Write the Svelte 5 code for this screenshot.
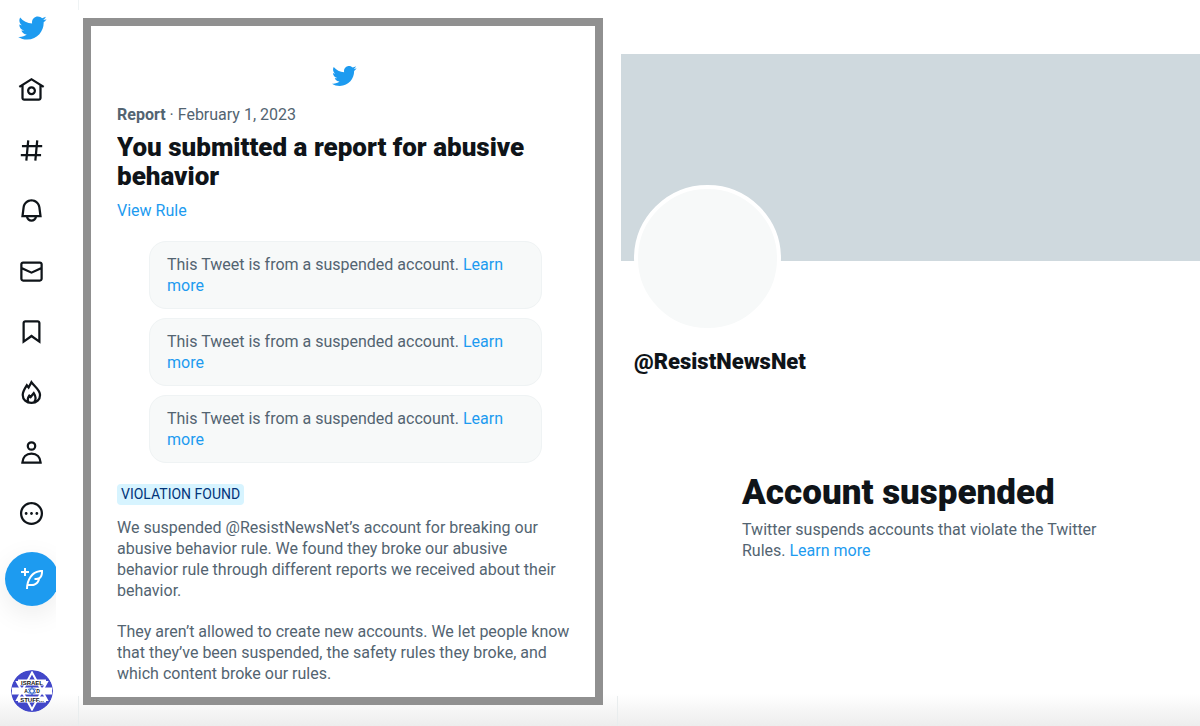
<script lang="ts">
	const bird =
		'M23.643 4.937c-.835.37-1.732.62-2.675.733.962-.576 1.7-1.49 2.048-2.578-.9.534-1.897.922-2.958 1.13-.85-.904-2.06-1.47-3.4-1.47-2.572 0-4.658 2.086-4.658 4.66 0 .364.042.718.12 1.06-3.873-.195-7.304-2.05-9.602-4.868-.4.69-.63 1.49-.63 2.342 0 1.616.823 3.043 2.072 3.878-.764-.025-1.482-.234-2.11-.583v.06c0 2.257 1.605 4.14 3.737 4.568-.392.106-.803.162-1.227.162-.3 0-.593-.028-.877-.082.593 1.85 2.313 3.198 4.352 3.234-1.595 1.25-3.604 1.995-5.786 1.995-.376 0-.747-.022-1.112-.065 2.062 1.323 4.51 2.093 7.14 2.093 8.57 0 13.255-7.098 13.255-13.254 0-.2-.005-.402-.014-.602.91-.658 1.7-1.477 2.323-2.41z';

	const navItems = [
		{
			label: 'Home',
			path: 'M12 9c-2.209 0-4 1.791-4 4s1.791 4 4 4 4-1.791 4-4-1.791-4-4-4zm0 6c-1.105 0-2-.895-2-2s.895-2 2-2 2 .895 2 2-.895 2-2 2zm0-13.304L.622 8.807l1.06 1.696L3 9.679V19.5C3 20.881 4.119 22 5.5 22h13c1.381 0 2.5-1.119 2.5-2.5V9.679l1.318.824 1.06-1.696L12 1.696zM19 19.5c0 .276-.224.5-.5.5h-13c-.276 0-.5-.224-.5-.5V8.429l7-4.375 7 4.375V19.5z'
		},
		{
			label: 'Explore',
			path: 'M10.09 3.098L9.72 7h5.99l.39-4.089 1.99.187L17.72 7h3.78v2h-3.97l-.56 6h3.53v2h-3.72l-.38 4.089-1.99-.187.36-3.902H8.78l-.38 4.089-1.99-.187L6.77 17H2.5v-2h4.46l.56-6H3.5V7h4.21l.39-4.089 1.99.187zM14.96 15l.56-6H9.53l-.56 6h5.99z'
		},
		{
			label: 'Notifications',
			path: 'M19.993 9.042C19.48 5.017 16.054 2 11.996 2s-7.49 3.021-7.999 7.051L2.866 18H7.1c.463 2.282 2.481 4 4.9 4s4.437-1.718 4.9-4h4.236l-1.143-8.958zM12 20c-1.306 0-2.417-.835-2.829-2h5.658c-.412 1.165-1.523 2-2.829 2zm-6.866-4l.847-6.698C6.364 6.272 8.941 4 11.996 4s5.627 2.268 6.013 5.295L18.864 16H5.134z'
		},
		{
			label: 'Messages',
			path: 'M1.998 5.5c0-1.381 1.119-2.5 2.5-2.5h15c1.381 0 2.5 1.119 2.5 2.5v13c0 1.381-1.119 2.5-2.5 2.5h-15c-1.381 0-2.5-1.119-2.5-2.5v-13zm2.5-.5c-.276 0-.5.224-.5.5v2.764l8 3.638 8-3.636V5.5c0-.276-.224-.5-.5-.5h-15zm15.5 5.463l-8 3.636-8-3.638V18.5c0 .276.224.5.5.5h15c.276 0 .5-.224.5-.5v-8.037z'
		},
		{
			label: 'Bookmarks',
			path: 'M4 4.5C4 3.12 5.119 2 6.5 2h11C18.881 2 20 3.12 20 4.5v18.44l-8-5.71-8 5.71V4.5zM6.5 4c-.276 0-.5.22-.5.5v14.56l6-4.29 6 4.29V4.5c0-.28-.224-.5-.5-.5h-11z'
		},
		{
			label: 'Trending',
			stroke:
				'M11.9 2.8L9.4 7.6L7.8 5.6C6 8.4 4.2 11 4.2 14.2C4.2 18.2 7.4 21.2 12 21.2S19.6 18.2 19.6 14.2C19.6 9.4 14.4 6.4 11.9 2.8zM9.4 20.6C8 18.6 8.8 16.6 10 14.9L11.2 16L14 12.6C15.6 15 16.4 18 14.4 20.6'
		},
		{
			label: 'Profile',
			stroke:
				'M12 2.9a3.3 3.3 0 1 0 0 6.6a3.3 3.3 0 0 0 0-6.6zM3.9 20.9h16.2C19.8 16.2 16.8 12.9 12 12.9S4.2 16.2 3.9 20.9z'
		},
		{
			label: 'More',
			path: 'M3.75 12c0-4.56 3.69-8.25 8.25-8.25s8.25 3.69 8.25 8.25-3.69 8.25-8.25 8.25S3.75 16.56 3.75 12zM12 1.75C6.34 1.75 1.75 6.34 1.75 12S6.34 22.25 12 22.25 22.25 17.66 22.25 12 17.66 1.75 12 1.75zm-4.75 11.5c.69 0 1.25-.56 1.25-1.25s-.56-1.25-1.25-1.25S6 11.31 6 12s.56 1.25 1.25 1.25zm9.5 0c.69 0 1.25-.56 1.25-1.25s-.56-1.25-1.25-1.25-1.25.56-1.25 1.25.56 1.25 1.25 1.25zM13.25 12c0 .69-.56 1.25-1.25 1.25s-1.25-.56-1.25-1.25.56-1.25 1.25-1.25 1.25.56 1.25 1.25z'
		}
	];

	const tweets = [1, 2, 3];
	const handle = '@ResistNewsNet';
</script>

<div class="page">
	<header class="sidebar">
		<a class="logo" href="#home" aria-label="Twitter">
			<svg viewBox="0 0 24 24"><path d={bird} /></svg>
		</a>

		<nav aria-label="Primary">
			{#each navItems as item}
				<a href="#{item.label.toLowerCase()}" aria-label={item.label}>
					<svg viewBox="0 0 24 24">
						{#if item.stroke}
							<path class="line" d={item.stroke} />
						{:else}
							<path d={item.path} />
						{/if}
					</svg>
				</a>
			{/each}
		</nav>

		<button class="compose" aria-label="Tweet">
			<svg viewBox="0 0 24 24">
				<path d="M23 3c-6.62-.1-10.38 2.421-13.05 6.03C7.29 12.61 6 17.331 6 22h2c0-1.007.07-2.012.19-3H12c4.1 0 7.48-3.082 7.94-7.054C22.79 10.147 23.17 6.359 23 3zm-7 8h-1.5v2H16c.63-.016 1.2-.08 1.72-.188C16.95 15.24 14.68 17 12 17H8.55c.57-2.512 1.57-4.851 3-6.78 2.16-2.912 5.29-4.911 9.45-5.187C20.95 8.079 19.9 11 16 11zM4 9V6H1V4h3V1h2v3h3v2H6v3H4z" />
			</svg>
		</button>

		<button class="me" aria-label="Account">
			<svg viewBox="0 0 42 42">
				<circle cx="21" cy="21" r="21" fill="#4247c9" />
				<path d="M21 2.5L36 30H6zM21 39.5L6 12H36z" fill="none" stroke="#fff" stroke-width="2" />
				<path d="M7 9.5h28v6H7zM1 17.5h40v7H1zM7 26.5h28v6H7z" fill="#fff" />
				<path d="M21 17L24.5 23H17.5zM21 25L17.5 19H24.5z" fill="none" stroke="#3f6fd0" stroke-width="1" />
				<text x="21" y="14.7" font-size="6">ISRAEL</text>
				<text x="15" y="22.9" font-size="5">A</text>
				<text x="27" y="22.9" font-size="5">D</text>
				<text x="21" y="31.7" font-size="6">STUFF...</text>
			</svg>
		</button>
	</header>

	<main class="report-column">
		<section class="report">
			<div class="report-body">
				<svg class="report-bird" viewBox="0 0 24 24"><path d={bird} /></svg>
				<p class="meta"><strong>Report</strong> · February 1, 2023</p>
				<h1>You submitted a report for abusive behavior</h1>
				<a href="#rule">View Rule</a>

				<div class="tweets">
					{#each tweets as tweet (tweet)}
						<p class="tweet">
							This Tweet is from a suspended account. <a href="#learn">Learn more</a>
						</p>
					{/each}
				</div>

				<span class="badge">VIOLATION FOUND</span>
				<p class="outcome">
					We suspended {handle}’s account for breaking our abusive behavior rule. We found they
					broke our abusive behavior rule through different reports we received about their behavior.
				</p>
				<p class="outcome">
					They aren’t allowed to create new accounts. We let people know that they’ve been suspended,
					the safety rules they broke, and which content broke our rules.
				</p>
			</div>
		</section>
	</main>

	<aside class="profile">
		<div class="banner"></div>
		<div class="avatar"></div>
		<h2>{handle}</h2>

		<div class="notice">
			<h3>Account suspended</h3>
			<p>
				Twitter suspends accounts that violate the Twitter Rules. <a href="#learn">Learn more</a>
			</p>
		</div>
	</aside>
</div>

<style>
	:global(body) {
		margin: 0;
		background: #fff;
	}

	.page {
		display: grid;
		grid-template-columns: 78px minmax(0, 540fr) minmax(0, 582fr);
		height: 100vh;
		overflow: hidden;
		background: linear-gradient(to top, #ededed, #fff 32px);
		font-family: Roboto, 'Liberation Sans', sans-serif;
		font-size: 16px;
		line-height: 21px;
		color: #536471;
	}

	p,
	h1,
	h2,
	h3 {
		margin: 0;
	}

	a {
		color: #1d9bf0;
		text-decoration: none;
	}

	h1,
	h2,
	h3 {
		color: #0f1419;
		font-weight: 900;
	}

	svg {
		display: block;
		fill: currentColor;
	}

	/* sidebar */
	.sidebar {
		display: flex;
		flex-direction: column;
		box-sizing: border-box;
		width: 56px;
		padding: 13px 0 14px 5px;
		overflow: hidden;
	}

	.logo svg {
		width: 30px;
		height: 30px;
		margin-left: 12px;
	}

	nav {
		display: flex;
		flex: 1;
		flex-direction: column;
		justify-content: space-between;
		margin: 33px 0 25px;
	}

	nav a {
		margin-left: 13px;
		color: #0f1419;
	}

	nav svg {
		width: 27px;
		height: 27px;
	}

	.line {
		fill: none;
		stroke: currentColor;
		stroke-width: 2;
	}

	button {
		flex: none;
		padding: 0;
		border: 0;
		border-radius: 50%;
		cursor: pointer;
	}

	.compose {
		display: grid;
		place-items: center;
		width: 54px;
		height: 54px;
		margin-bottom: 64px;
		background: #1d9bf0;
		color: #fff;
		box-shadow: 0 8px 28px rgba(0, 0, 0, 0.08);
	}

	.compose svg {
		width: 24px;
		height: 24px;
	}

	.me {
		width: 42px;
		height: 42px;
		margin-left: 6px;
		overflow: hidden;
		background: none;
	}

	.me text {
		font-family: 'Liberation Sans', sans-serif;
		font-weight: 700;
		text-anchor: middle;
		fill: #111;
	}

	/* report */
	.report-column {
		display: flex;
		box-sizing: border-box;
		min-height: 0;
		padding: 18px 15px 21px 5px;
		/* column rules fade out behind the report frame */
		background:
			linear-gradient(#eff3f4, #eff3f4) left top / 1px 10px no-repeat,
			linear-gradient(#e9edee, #e9edee) left bottom / 1px 30px no-repeat,
			linear-gradient(#e9edee, #e9edee) right bottom / 1px 30px no-repeat;
	}

	.report {
		display: flex;
		flex: 1;
		box-sizing: border-box;
		padding: 37px 24px 18px 26px;
		border: 8px solid #909090;
		background: #fff;
	}

	.report-body {
		flex: 1;
		overflow: hidden;
	}

	.report-bird {
		width: 26px;
		height: 26px;
		margin: 0 auto 15px;
		color: #1d9bf0;
	}

	h1 {
		margin: 8px 0 9px;
		font-size: 26px;
		line-height: 29px;
	}

	.tweets {
		display: grid;
		gap: 9px;
		margin: 20px 29px 20px 32px;
	}

	.tweet {
		padding: 12px 17px;
		border: 1px solid #eff3f4;
		border-radius: 17px;
		background: #f7f9f9;
	}

	.badge {
		display: inline-block;
		padding: 0 4px;
		border-radius: 4px;
		background: #d7f4ff;
		color: #02347a;
		font-size: 14px;
	}

	.outcome {
		margin: 12px 0 20px;
	}

	.outcome + .outcome {
		margin: 0;
	}

	/* profile */
	.profile {
		padding: 54px 0 0 3px;
	}

	.banner {
		height: 207px;
		background: #cfd9de;
	}

	.avatar {
		box-sizing: border-box;
		position: relative;
		width: 147px;
		height: 147px;
		margin: -76px 0 0 13px;
		border: 4px solid #fff;
		border-radius: 50%;
		background: #f7f9f9;
	}

	h2 {
		margin: 17px 0 0 13px;
		font-size: 22px;
		line-height: 25px;
	}

	.notice {
		max-width: 370px;
		margin: 100px 20px 0 121px;
	}

	h3 {
		margin-bottom: 7px;
		font-size: 35px;
		line-height: 38px;
	}
</style>
